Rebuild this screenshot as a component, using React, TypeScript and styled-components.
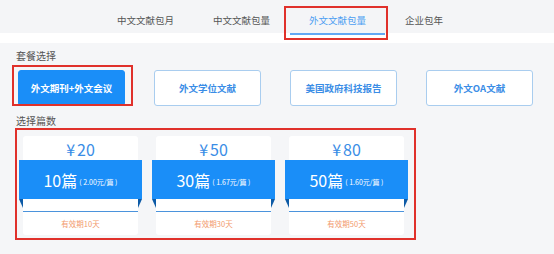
import React from "react";
import styled, { createGlobalStyle } from "styled-components";

const Global = createGlobalStyle`
  html, body { margin: 0; padding: 0; background: #f5f6f8; }
  body { font-family: "Noto Sans CJK SC", "Noto Sans", sans-serif; width: 554px; height: 254px; overflow: hidden; }
  * { box-sizing: border-box; }
`;

const Page = styled.div`
  width: 554px;
  height: 254px;
  background: #f5f6f8;
`;

const TabBar = styled.div`
  height: 33px;
  display: flex;
  align-items: flex-start;
  padding-left: 98px;
  gap: 1px;
  background: #f4f5f7;
`;

const Tab = styled.div<{ $active?: boolean }>`
  position: relative;
  height: 35px;
  padding: 6px 19px 0;
  display: flex;
  align-items: center;
  font-size: 9.5px;
  color: ${(p) => (p.$active ? "#4c9ef2" : "#555")};
  border-bottom: 2px solid ${(p) => (p.$active ? "#62a8f4" : "transparent")};
  white-space: nowrap;
  &::after {
    content: "";
    display: ${(p) => (p.$active ? "block" : "none")};
    position: absolute;
    top: 6px;
    left: -6px;
    right: -3px;
    bottom: -7px;
    border: 2px solid #e0312b;
  }
`;

const WhiteBand = styled.div`
  height: 10px;
  background: #fff;
`;

const Content = styled.div`
  padding-left: 15px;
`;

const Label = styled.div<{ $top: number }>`
  margin-top: ${(p) => p.$top}px;
  padding-left: 1px;
  height: 14px;
  line-height: 14px;
  font-size: 10px;
  color: #555;
`;

const PlanRow = styled.div`
  display: flex;
  gap: 29px;
  margin-top: 7px;
  padding-left: 3px;
`;

const PlanButton = styled.div<{ $active?: boolean; $marked?: boolean }>`
  position: relative;
  width: 107px;
  height: 36px;
  display: flex;
  align-items: center;
  justify-content: center;
  border-radius: 3px;
  font-size: 9.5px;
  font-weight: 700;
  background: ${(p) => (p.$active ? "#1a8ef8" : "#fff")};
  color: ${(p) => (p.$active ? "#fff" : "#3a8de6")};
  border: 1px solid ${(p) => (p.$active ? "#1a8ef8" : "#a9cdef")};
  &::after {
    content: "";
    display: ${(p) => (p.$marked ? "block" : "none")};
    position: absolute;
    top: -6px;
    left: -7px;
    right: -9px;
    bottom: -1px;
    border: 2px solid #e0312b;
  }
`;

const CardsBox = styled.div`
  width: 401px;
  height: 112px;
  border: 2px solid #e0312b;
  padding: 6px 0 0 6px;
  display: flex;
  gap: 18px;
`;

const Card = styled.div`
  width: 115px;
  height: 99px;
  background: #fff;
  border-radius: 3px;
  display: flex;
  flex-direction: column;
`;

const Price = styled.div`
  height: 24px;
  display: flex;
  align-items: center;
  justify-content: center;
  font-size: 16px;
  color: #3a8de6;
  padding-top: 1px;
`;

const Yen = styled.span`
  margin-right: 2px;
`;

const Ribbon = styled.div`
  position: relative;
  height: 39px;
  margin: 0 -4px;
  background: #1a8ef8;
  display: flex;
  align-items: center;
  justify-content: center;
  color: #fff;
  &::before,
  &::after {
    content: "";
    position: absolute;
    top: 39px;
    width: 0;
    height: 0;
    border-top: 9px solid #0c5aa6;
  }
  &::before {
    left: 0;
    border-left: 4px solid transparent;
  }
  &::after {
    right: 0;
    border-right: 4px solid transparent;
  }
`;

const Count = styled.span`
  font-size: 16px;
`;

const Unit = styled.span`
  font-size: 7px;
  margin-left: 2px;
  margin-top: 4px;
`;

const Gap = styled.div`
  height: 13px;
  border-bottom: 1px solid #4b93dc;
`;

const Validity = styled.div`
  flex: 1;
  display: flex;
  align-items: center;
  justify-content: center;
  font-size: 7.5px;
  color: #f29a6c;
`;

const tabs = ["中文文献包月", "中文文献包量", "外文文献包量", "企业包年"];
const plans = ["外文期刊+外文会议", "外文学位文献", "美国政府科技报告", "外文OA文献"];
const packs = [
  { price: "20", count: "10", unit: "2.00", days: "10" },
  { price: "50", count: "30", unit: "1.67", days: "30" },
  { price: "80", count: "50", unit: "1.60", days: "50" },
];

export default function App() {
  return (
    <Page>
      <Global />
      <TabBar>
        {tabs.map((t, i) => (
          <Tab key={t} $active={i === 2}>
            {t}
          </Tab>
        ))}
      </TabBar>
      <WhiteBand />
      <Content>
        <Label $top={6}>套餐选择</Label>
        <PlanRow>
          {plans.map((p, i) => (
            <PlanButton key={p} $active={i === 0} $marked={i === 0}>
              {p}
            </PlanButton>
          ))}
        </PlanRow>
        <Label $top={8}>选择篇数</Label>
        <CardsBox>
          {packs.map((p) => (
            <Card key={p.price}>
              <Price>
                <Yen>¥</Yen>
                {p.price}
              </Price>
              <Ribbon>
                <Count>{p.count}篇</Count>
                <Unit>( {p.unit}元/篇 )</Unit>
              </Ribbon>
              <Gap />
              <Validity>有效期{p.days}天</Validity>
            </Card>
          ))}
        </CardsBox>
      </Content>
    </Page>
  );
}
